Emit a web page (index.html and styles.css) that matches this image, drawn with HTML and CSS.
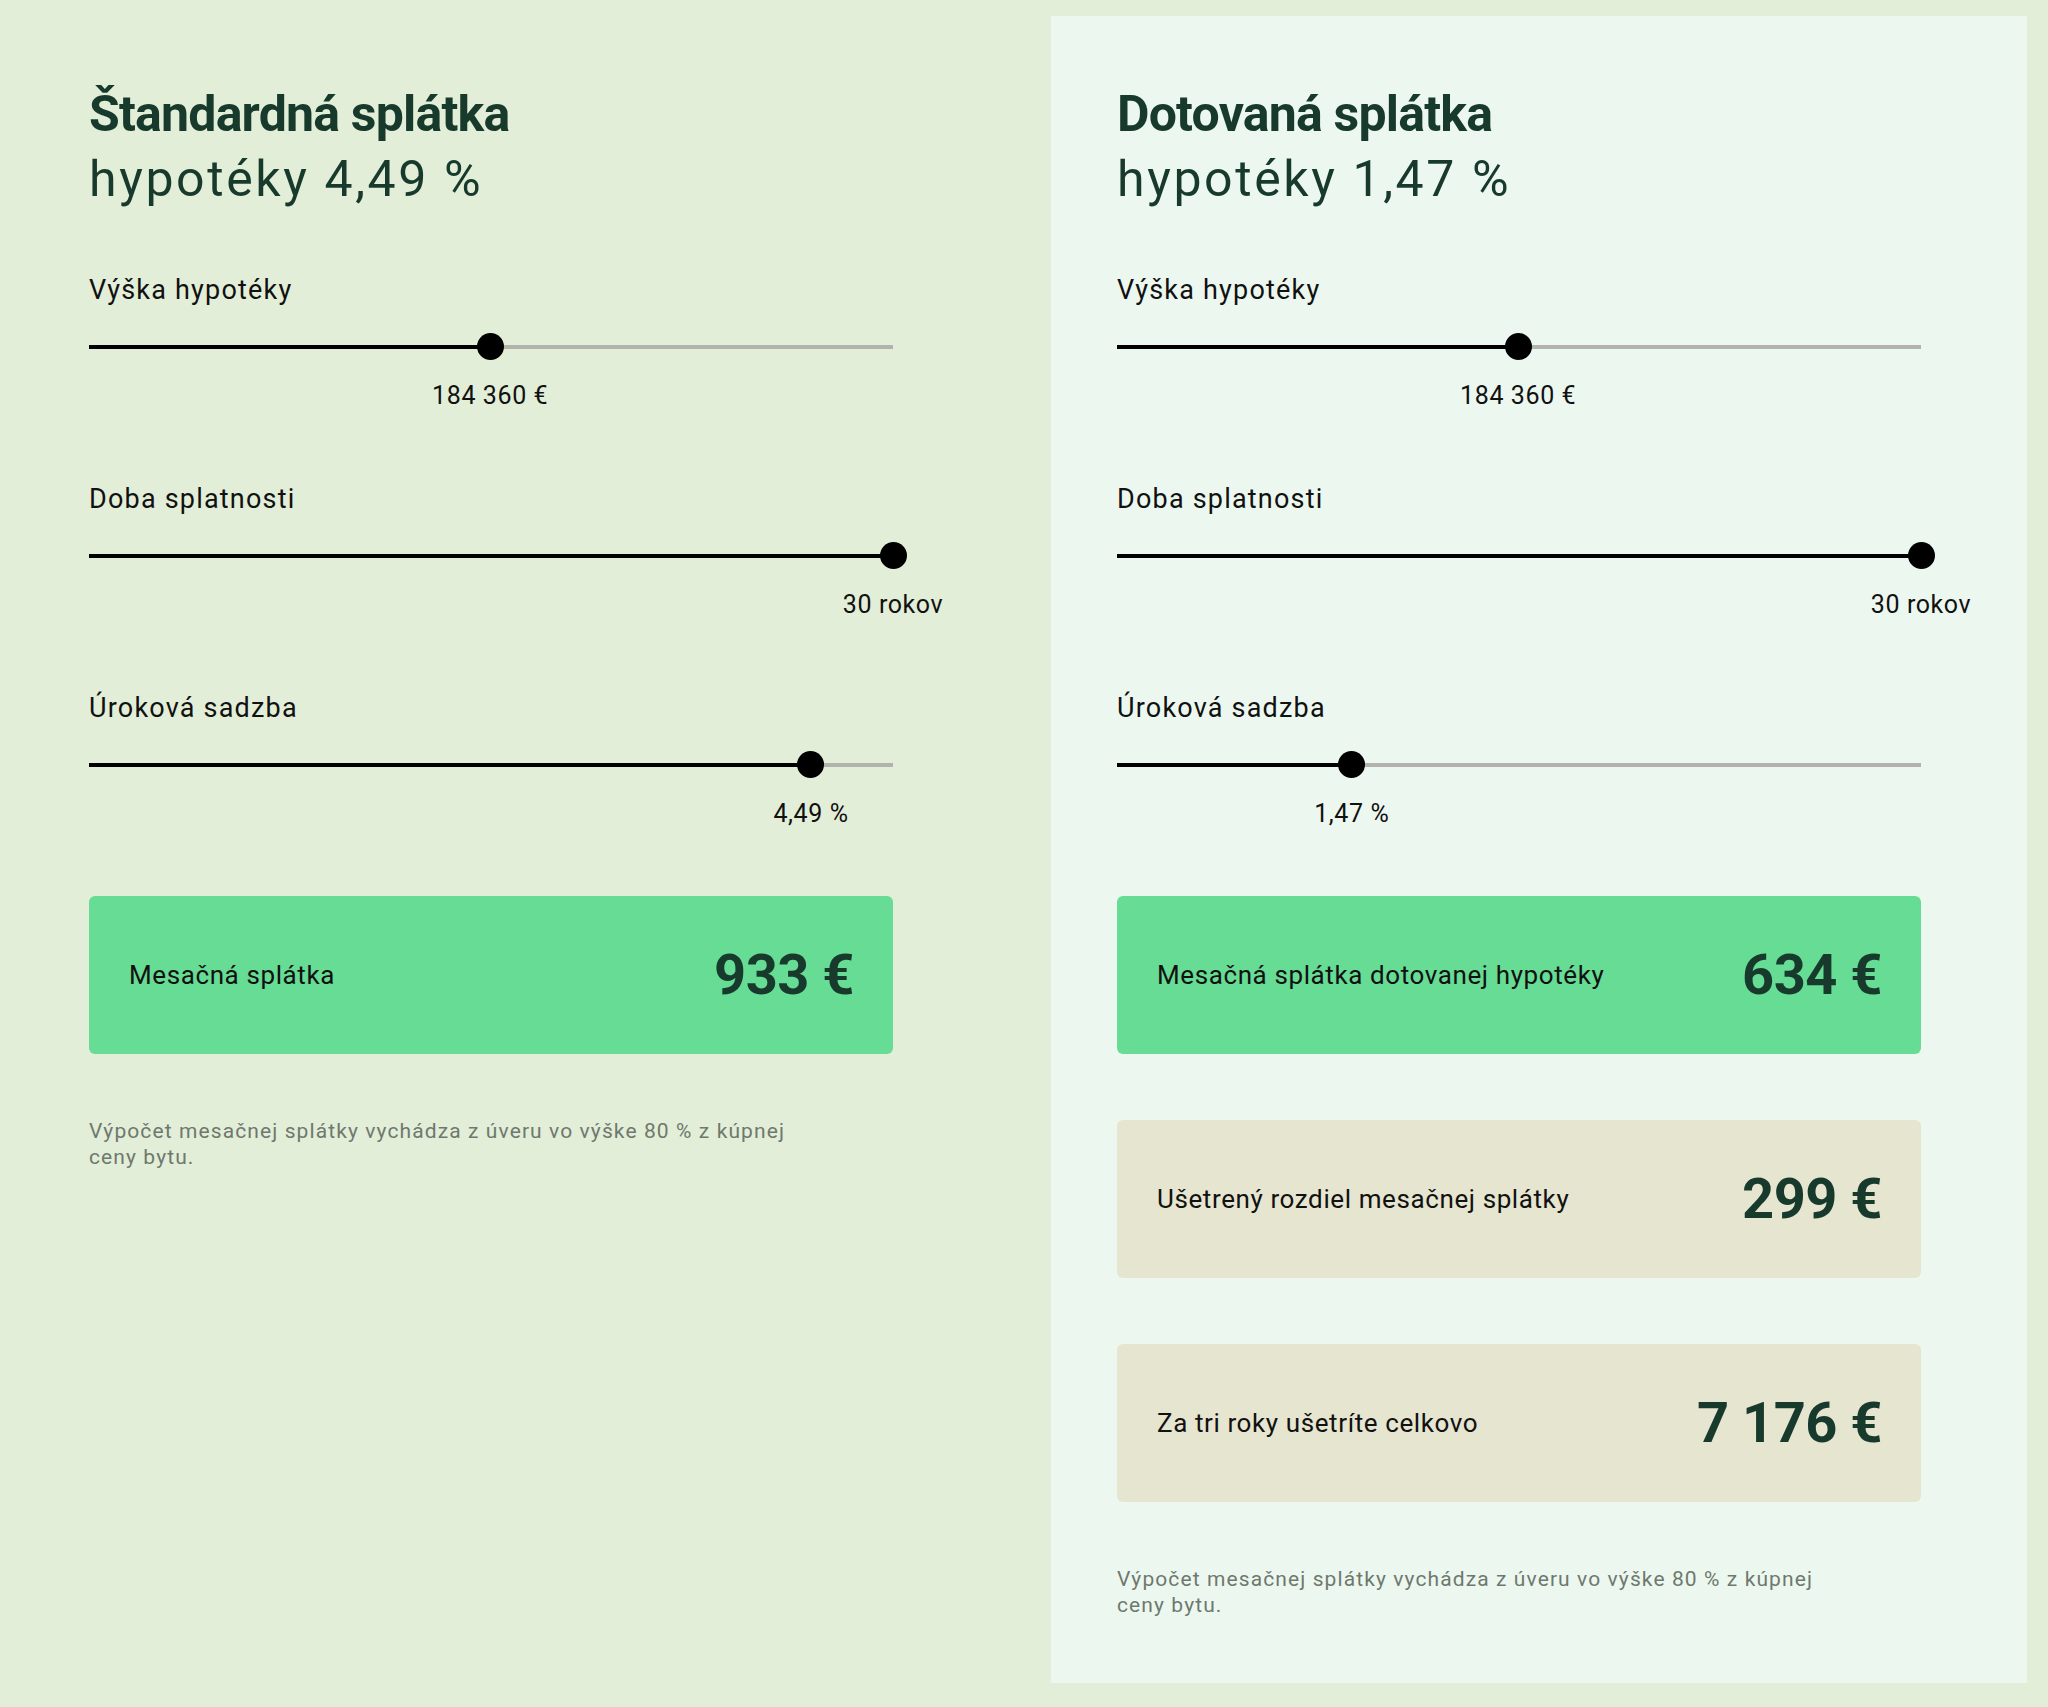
FILE: index.html
```html
<!DOCTYPE html>
<html lang="sk">
<head>
<meta charset="utf-8">
<title>Kalkulačka hypotéky</title>
<link rel="stylesheet" href="styles.css">
</head>
<body>
<main class="page">
  <section class="col col-standard">
    <h2 class="title"><span class="title-bold">Štandardná splátka</span><span class="title-light">hypotéky 4,49 %</span></h2>

    <div class="field">
      <div class="field-label">Výška hypotéky</div>
      <div class="slider" style="--p: 49.9%">
        <div class="track"></div><div class="fill"></div><div class="thumb"></div>
      </div>
      <div class="value-row" style="--p: 49.9%"><span class="value">184 360 €</span></div>
    </div>

    <div class="field">
      <div class="field-label">Doba splatnosti</div>
      <div class="slider" style="--p: 100%">
        <div class="track"></div><div class="fill"></div><div class="thumb"></div>
      </div>
      <div class="value-row" style="--p: 100%"><span class="value">30 rokov</span></div>
    </div>

    <div class="field">
      <div class="field-label">Úroková sadzba</div>
      <div class="slider" style="--p: 89.8%">
        <div class="track"></div><div class="fill"></div><div class="thumb"></div>
      </div>
      <div class="value-row" style="--p: 89.8%"><span class="value">4,49 %</span></div>
    </div>

    <div class="results">
      <div class="result result-green"><span class="result-label">Mesačná splátka</span><span class="result-amount">933 €</span></div>
    </div>

    <p class="note">Výpočet mesačnej splátky vychádza z úveru vo výške 80 % z kúpnej ceny bytu.</p>
  </section>

  <section class="col col-subsidized">
    <h2 class="title"><span class="title-bold">Dotovaná splátka</span><span class="title-light">hypotéky 1,47 %</span></h2>

    <div class="field">
      <div class="field-label">Výška hypotéky</div>
      <div class="slider" style="--p: 49.9%">
        <div class="track"></div><div class="fill"></div><div class="thumb"></div>
      </div>
      <div class="value-row" style="--p: 49.9%"><span class="value">184 360 €</span></div>
    </div>

    <div class="field">
      <div class="field-label">Doba splatnosti</div>
      <div class="slider" style="--p: 100%">
        <div class="track"></div><div class="fill"></div><div class="thumb"></div>
      </div>
      <div class="value-row" style="--p: 100%"><span class="value">30 rokov</span></div>
    </div>

    <div class="field">
      <div class="field-label">Úroková sadzba</div>
      <div class="slider" style="--p: 29.2%">
        <div class="track"></div><div class="fill"></div><div class="thumb"></div>
      </div>
      <div class="value-row" style="--p: 29.2%"><span class="value">1,47 %</span></div>
    </div>

    <div class="results">
      <div class="result result-green"><span class="result-label">Mesačná splátka dotovanej hypotéky</span><span class="result-amount">634 €</span></div>
      <div class="result result-beige"><span class="result-label">Ušetrený rozdiel mesačnej splátky</span><span class="result-amount">299 €</span></div>
      <div class="result result-beige"><span class="result-label">Za tri roky ušetríte celkovo</span><span class="result-amount">7 176 €</span></div>
    </div>

    <p class="note">Výpočet mesačnej splátky vychádza z úveru vo výške 80 % z kúpnej ceny bytu.</p>
  </section>
</main>
</body>
</html>
```

FILE: styles.css
```css
html, body {
  margin: 0;
  padding: 0;
  background: #e2eed7;
}

body {
  font-family: Roboto, "Liberation Sans", Arial, sans-serif;
  color: #111;
  min-height: 1707px;
}

.page {
  display: flex;
  align-items: flex-start;
  width: 2048px;
}

.col {
  box-sizing: border-box;
  display: flex;
  flex-direction: column;
}

.col-standard {
  width: 1051px;
  padding: 82px 0 0 89px;
}

.col-subsidized {
  width: 976px;
  margin: 16px 0 24px;
  padding: 66px 106px 65px 66px;
  background: #ecf8ef;
  min-height: 1667px;
}

.title {
  margin: 0;
  display: flex;
  flex-direction: column;
  color: #173a2c;
  font-size: 50px;
  line-height: 65px;
}

.title-bold {
  font-weight: 700;
  letter-spacing: -0.8px;
}

.title-light {
  font-weight: 400;
  letter-spacing: 2.6px;
}

.field {
  width: 804px;
  display: flex;
  flex-direction: column;
}

.field:first-of-type {
  margin-top: 62px;
}

.field + .field {
  margin-top: 72px;
}

.field-label {
  font-size: 27px;
  line-height: 32px;
  letter-spacing: 1.2px;
  color: #111;
}

.slider {
  position: relative;
  height: 28px;
  margin-top: 27px;
}

.track,
.fill {
  position: absolute;
  left: 0;
  top: 12px;
  height: 4px;
}

.track {
  right: 0;
  background: #b3b3ad;
}

.fill {
  width: var(--p);
  background: #000;
}

.thumb {
  position: absolute;
  top: 0;
  left: var(--p);
  width: 27px;
  height: 27px;
  margin-left: -13.5px;
  border-radius: 50%;
  background: #000;
}

.value-row {
  position: relative;
  height: 30px;
  margin-top: 20px;
}

.value {
  position: absolute;
  left: var(--p);
  top: 0;
  transform: translateX(-50%);
  white-space: nowrap;
  font-size: 25px;
  line-height: 30px;
  letter-spacing: 0.6px;
  color: #111;
}

.results {
  width: 804px;
  margin-top: 67px;
  display: flex;
  flex-direction: column;
  gap: 66px;
}

.result {
  box-sizing: border-box;
  height: 158px;
  padding: 0 39px 0 40px;
  border-radius: 6px;
  display: flex;
  align-items: center;
  justify-content: space-between;
}

.result-green {
  background: #66dc94;
}

.result-beige {
  background: #e6e5cf;
}

.result-label {
  font-size: 26px;
  letter-spacing: 0.6px;
  color: #111;
}

.result-amount {
  font-size: 56px;
  font-weight: 700;
  letter-spacing: -0.5px;
  color: #173a2c;
}

.note {
  margin: 64px 0 0;
  max-width: 730px;
  font-size: 21px;
  line-height: 26px;
  letter-spacing: 1.1px;
  color: #6f786e;
}
```
